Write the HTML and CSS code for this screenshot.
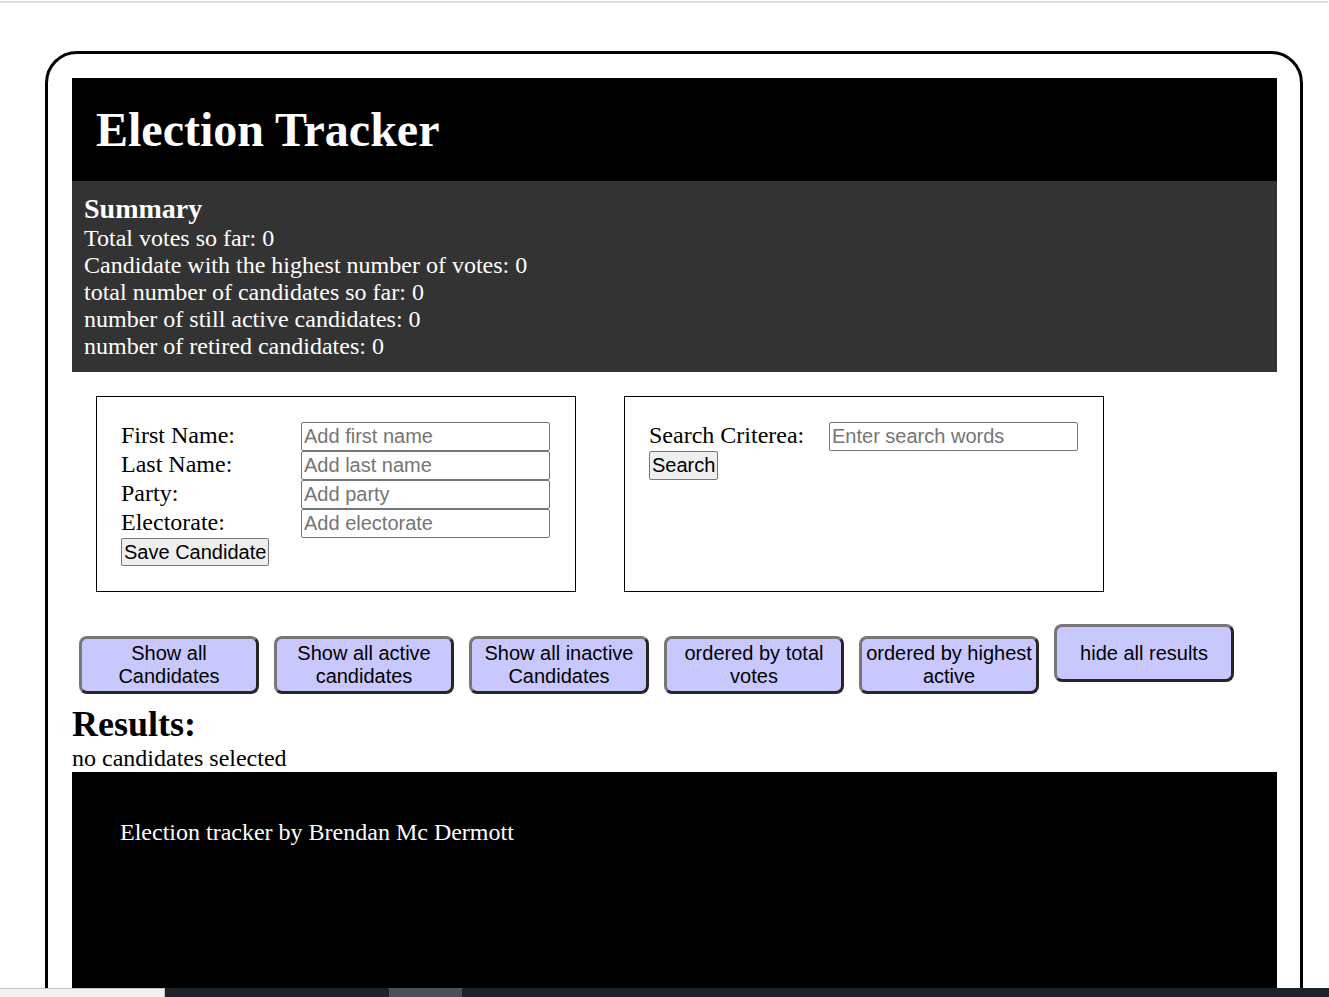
FILE: index.html
```html
<!DOCTYPE html>
<html lang="en">
<head>
<meta charset="utf-8">
<title>Election Tracker</title>
<link rel="stylesheet" href="styles.css">
</head>
<body>
<div class="topline"></div>
<div class="frame">
  <header class="masthead"><h1 class="title">Election Tracker</h1></header>
  <section class="summary">
    <h2 class="summary-title">Summary</h2>
    <div class="stat">Total votes so far: 0</div>
    <div class="stat">Candidate with the highest number of votes: 0</div>
    <div class="stat">total number of candidates so far: 0</div>
    <div class="stat">number of still active candidates: 0</div>
    <div class="stat">number of retired candidates: 0</div>
  </section>
  <div class="forms">
    <form class="panel">
      <div class="fields">
        <label class="lbl" for="fn">First Name:</label><input class="inp" id="fn" type="text" placeholder="Add first name">
        <label class="lbl" for="ln">Last Name:</label><input class="inp" id="ln" type="text" placeholder="Add last name">
        <label class="lbl" for="pt">Party:</label><input class="inp" id="pt" type="text" placeholder="Add party">
        <label class="lbl" for="el">Electorate:</label><input class="inp" id="el" type="text" placeholder="Add electorate">
      </div>
      <button class="sys save" type="button">Save Candidate</button>
    </form>
    <form class="panel">
      <div class="fields">
        <label class="lbl" for="sc">Search Criterea:</label><input class="inp" id="sc" type="text" placeholder="Enter search words">
      </div>
      <button class="sys search" type="button">Search</button>
    </form>
  </div>
  <div class="actions">
    <button class="act" type="button">Show all Candidates</button>
    <button class="act" type="button">Show all active candidates</button>
    <button class="act" type="button">Show all inactive Candidates</button>
    <button class="act" type="button">ordered by total votes</button>
    <button class="act" type="button">ordered by highest active</button>
    <button class="act" type="button">hide all results</button>
  </div>
  <h2 class="results-title">Results:</h2>
  <div class="results">no candidates selected</div>
  <footer class="foot">Election tracker by Brendan Mc Dermott</footer>
</div>
<div class="taskbar"><span class="tb-light"></span><span class="tb-dark"></span><span class="tb-mid"></span><span class="tb-rest"></span></div>
</body>
</html>
```
FILE: styles.css
```css
html, body {
  margin: 0;
  padding: 0;
  background: #fff;
  overflow: hidden;
}
body {
  font-family: "Liberation Serif", "Times New Roman", serif;
  color: #000;
}
.topline {
  margin-top: 1px;
  height: 2px;
  width: 1328px;
  background: #dedee6;
}
.frame {
  margin: 48px 0 0 45px;
  width: 1258px;
  box-sizing: border-box;
  border: 3px solid #000;
  border-radius: 32px;
  padding: 24px 23px 0 24px;
}
.masthead {
  background: #000;
  padding: 24px;
}
.title {
  margin: 0;
  color: #fff;
  font-size: 48px;
  font-weight: bold;
  line-height: 55px;
}
.summary {
  background: #333;
  color: #fff;
  padding: 12px 12px 12px;
}
.summary-title {
  margin: 0;
  font-size: 28px;
  line-height: 32px;
  font-weight: bold;
}
.stat {
  font-size: 24px;
  line-height: 27px;
}
.forms {
  display: flex;
  gap: 48px;
  margin: 24px 0 0 24px;
}
.panel {
  width: 480px;
  height: 196px;
  box-sizing: border-box;
  border: 1px solid #000;
  padding: 25px 24px;
  margin: 0;
}
.fields {
  display: grid;
  grid-template-columns: 180px 249px;
  grid-auto-rows: 29px;
}
.lbl {
  font-size: 24px;
  line-height: 27px;
}
.inp {
  box-sizing: border-box;
  height: 29px;
  width: 249px;
  margin: 0;
  font-family: "Liberation Sans", Arial, sans-serif;
  font-size: 20px;
  padding: 1px 2px;
  border: 1px solid #767676;
  border-radius: 2px;
  color: #000;
  background: #fff;
}
.inp::placeholder {
  color: #757575;
}
.sys {
  font-family: "Liberation Sans", Arial, sans-serif;
  font-size: 20px;
  line-height: 23px;
  padding: 2px 2px 1px;
  margin: 0;
  background: #efefef;
  color: #000;
  border: 1px solid #767676;
  border-radius: 2px;
}
.search {
  padding-bottom: 2px;
}
.actions {
  display: flex;
  align-items: baseline;
  gap: 15px;
  margin: 32px 0 0 7px;
}
.act {
  width: 180px;
  height: 58px;
  box-sizing: border-box;
  padding: 0;
  margin: 0;
  font-family: "Liberation Sans", Arial, sans-serif;
  font-size: 20px;
  line-height: 23px;
  color: #000;
  background: #c8c8ff;
  border: 3px solid;
  border-color: #777 #262626 #262626 #777;
  border-radius: 8px;
}
.results-title {
  margin: 9px 0 0;
  font-size: 36px;
  line-height: 42px;
  font-weight: bold;
}
.results {
  font-size: 24px;
  line-height: 27px;
}
.foot {
  background: #000;
  color: #fff;
  font-size: 24px;
  padding: 47px 48px 0;
  height: 260px;
}
.taskbar {
  position: fixed;
  left: 0;
  bottom: 0;
  width: 100%;
  height: 9px;
  display: flex;
}
.tb-light {
  width: 164px;
  background: #f2f2f2;
  border-top: 1px solid #c0c0c0;
  border-right: 1px solid #c0c0c0;
}
.tb-dark {
  width: 224px;
  background: #1c232b;
}
.tb-mid {
  width: 73px;
  background: #4a5159;
}
.tb-rest {
  flex: 1;
  background: #1c232b;
}
```
